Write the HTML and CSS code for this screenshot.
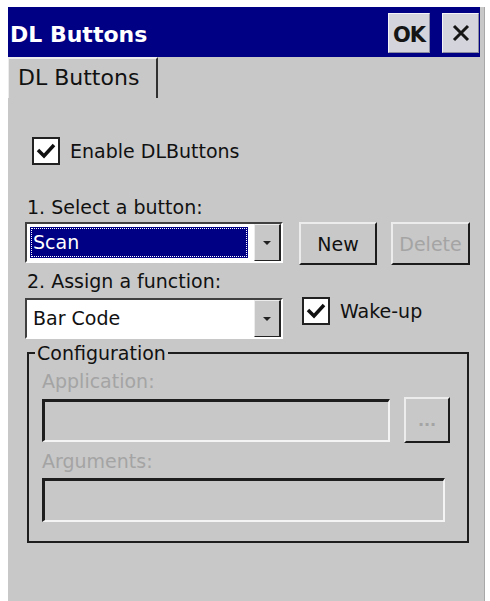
FILE: index.html
```html
<!DOCTYPE html>
<html lang="en">
<head>
  <meta charset="UTF-8">
  <meta name="viewport" content="width=device-width, initial-scale=1.0">
  <link rel="stylesheet" href="styles.css">
  <title>DL Buttons</title>
</head>
<body>

  <div class="window">
    <div class="titlebar">
      <span class="title">DL Buttons</span>
      <button class="cap-btn ok">OK</button>
      <button class="cap-btn close">
        <svg width="18" height="18" viewBox="0 0 18 18"><path d="M2 2 L16 16 M16 2 L2 16" stroke="#151515" stroke-width="3"/></svg>
      </button>
    </div>

    <div class="tabs">
      <div class="tab">DL Buttons</div>
    </div>

    <div class="page">
      <label class="check enable">
        <span class="box"><svg width="24" height="24" viewBox="0 0 24 24"><path d="M4 11 L10 17 L20 6" fill="none" stroke="#111" stroke-width="3.5"/></svg></span>
        Enable DLButtons
      </label>

      <div class="label step1">1. Select a button:</div>
      <div class="row">
        <div class="combo">
          <span class="value selected">Scan</span>
          <span class="drop"><span class="arrow"></span></span>
        </div>
        <button class="btn new">New</button>
        <button class="btn delete" disabled>Delete</button>
      </div>

      <div class="label step2">2. Assign a function:</div>
      <div class="row">
        <div class="combo">
          <span class="value">Bar Code</span>
          <span class="drop"><span class="arrow"></span></span>
        </div>
        <label class="check wake">
          <span class="box"><svg width="24" height="24" viewBox="0 0 24 24"><path d="M4 11 L10 17 L20 6" fill="none" stroke="#111" stroke-width="3.5"/></svg></span>
          Wake-up
        </label>
      </div>

      <fieldset class="group">
        <legend>Configuration</legend>
        <div class="label off app-label">Application:</div>
        <div class="field-row">
          <div class="field app"></div>
          <button class="btn browse" disabled>...</button>
        </div>
        <div class="label off args-label">Arguments:</div>
        <div class="field args"></div>
      </fieldset>
    </div>
  </div>

</body>
</html>
```

FILE: styles.css
```css
body {
  margin: 0;
  background-color: #fff;
  font-family: "DejaVu Sans", sans-serif;
  font-size: 19px;
  color: #111;
}

.window {
  margin: 7px 0 0 8px;
  width: 477px;
  min-height: 594px;
  background-color: #c8c8c8;
  border-right: 1px solid #a8a8a8;
  box-sizing: border-box;
  display: flex;
  flex-direction: column;
}

/* caption bar */
.titlebar {
  height: 50px;
  margin-right: 4px;
  padding: 0 1px 0 2px;
  background-color: #000084;
  display: flex;
  align-items: flex-start;
}

.title {
  flex: 1;
  margin-top: 15px;
  color: #fff;
  font-weight: bold;
  font-size: 22px;
  line-height: 26px;
  white-space: nowrap;
}

.cap-btn {
  height: 40px;
  margin-top: 6px;
  padding: 3px 0 0;
  background-color: #d4d4dc;
  border: 1px solid;
  border-color: #f4f4f8 #8c8ca0 #8c8ca0 #f4f4f8;
  font-family: "DejaVu Sans", sans-serif;
  font-weight: bold;
  font-size: 21px;
  color: #151515;
  display: flex;
  align-items: center;
  justify-content: center;
}

.ok {
  width: 42px;
  letter-spacing: -1px;
}

.close {
  width: 37px;
  margin-left: 12px;
  padding: 0;
}

/* tab strip */
.tabs {
  height: 41px;
  display: flex;
}

.tab {
  width: 150px;
  box-sizing: border-box;
  border-top: 2px solid #ececec;
  border-left: 1px solid #ececec;
  border-right: 2px solid #303030;
  padding: 6px 0 0 9px;
  font-size: 22px;
  line-height: 26px;
}

/* page body */
.page {
  padding: 0 0 0 17px;
}

.check {
  display: flex;
  align-items: center;
  height: 28px;
  line-height: 22px;
  white-space: nowrap;
}

.box {
  width: 28px;
  height: 28px;
  box-sizing: border-box;
  background-color: #fff;
  border: 2px solid #222;
  margin-right: 10px;
  display: flex;
  align-items: center;
  justify-content: center;
}

.enable {
  margin: 39px 0 0 7px;
}

.label {
  line-height: 22px;
  margin-left: 2px;
  white-space: nowrap;
}

.step1 {
  margin-top: 31px;
}

.step2 {
  margin-top: 5px;
}

.row {
  display: flex;
  align-items: flex-start;
  margin-top: 4px;
}

.step2 + .row {
  margin-top: 6px;
}

.combo {
  width: 258px;
  height: 41px;
  box-sizing: border-box;
  border: 2px solid;
  border-color: #404040 #fff #fff #404040;
  background-color: #fff;
  display: flex;
}

.value {
  flex: 1;
  margin: 3px 6px 3px 3px;
  padding-left: 3px;
  line-height: 30px;
}

.value.selected {
  background-color: #000084;
  color: #fff;
  outline: 1px dotted #fff;
  outline-offset: -2px;
}

.drop {
  width: 27px;
  box-sizing: border-box;
  background-color: #c8c8c8;
  border: 1px solid;
  border-color: #ececec #222 #222 #ececec;
  border-right-width: 2px;
  display: flex;
  align-items: center;
  justify-content: center;
}

.arrow {
  width: 0;
  height: 0;
  border-left: 4px solid transparent;
  border-right: 4px solid transparent;
  border-top: 4px solid #222;
}

.btn {
  height: 43px;
  box-sizing: border-box;
  background-color: #c8c8c8;
  border: 2px solid;
  border-color: #ececec #1c1c1c #1c1c1c #ececec;
  padding: 0;
  font-family: "DejaVu Sans", sans-serif;
  font-size: 19px;
  color: #111;
}

.new {
  width: 78px;
  margin-left: 16px;
}

.delete {
  width: 79px;
  margin-left: 14px;
}

.btn:disabled {
  color: #a4a4a4;
}

.wake {
  margin: -1px 0 0 19px;
}

/* configuration group */
.group {
  width: 442px;
  box-sizing: border-box;
  margin: 3px 0 0 2px;
  padding: 0 0 19px 13px;
  border: 2px solid #1e1e1e;
}

.group legend {
  margin-left: -7px;
  padding: 0 2px;
  line-height: 22px;
}

.label.off {
  margin-left: 0;
  color: #a4a4a4;
}

.app-label {
  margin-top: 6px;
}

.args-label {
  margin-top: 7px;
}

.field-row {
  display: flex;
  align-items: center;
  margin-top: 5px;
}

.field {
  box-sizing: border-box;
  border: 3px solid;
  border-color: #1e1e1e #f4f4f4 #f4f4f4 #1e1e1e;
  border-right-width: 2px;
  border-bottom-width: 2px;
}

.app {
  width: 348px;
  height: 43px;
}

.browse {
  width: 46px;
  height: 46px;
  margin-left: 14px;
  font-size: 16px;
  font-weight: bold;
}

.args {
  width: 403px;
  height: 44px;
  margin-top: 6px;
}
```
